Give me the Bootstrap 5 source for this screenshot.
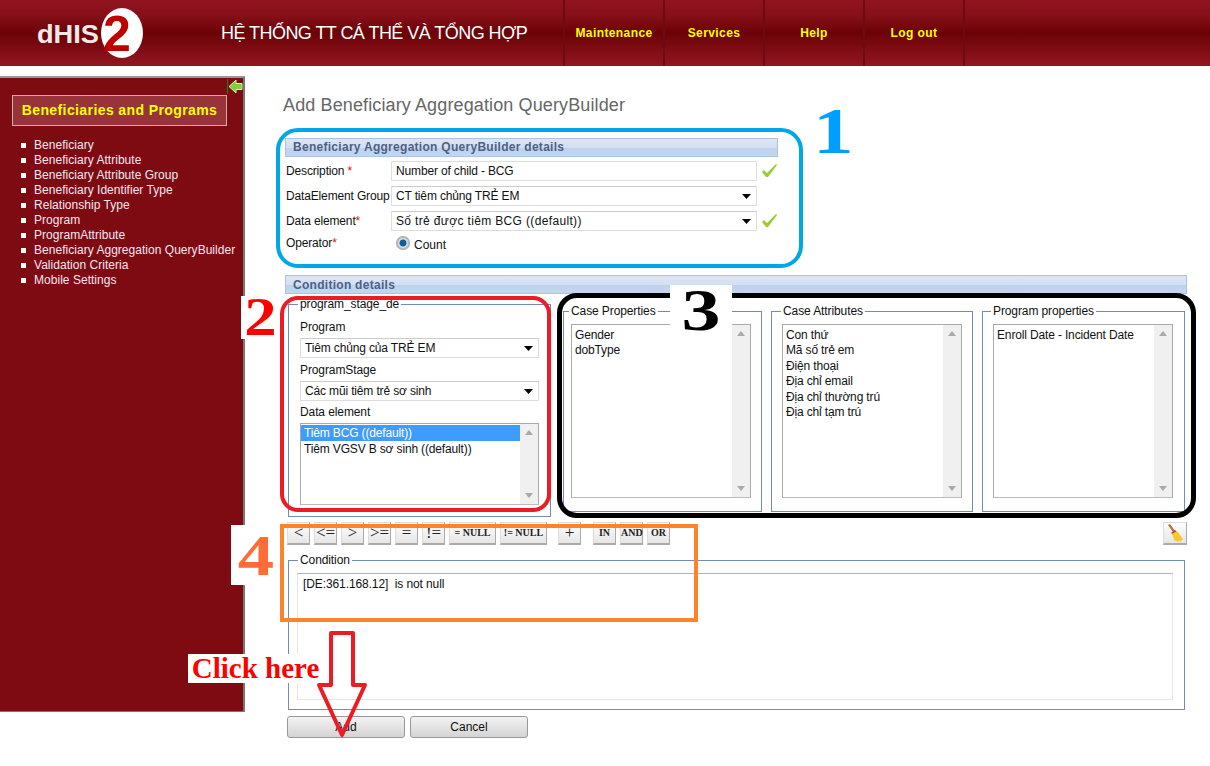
<!DOCTYPE html>
<html lang="vi">
<head>
  <meta charset="UTF-8">
  <title>Add Beneficiary Aggregation QueryBuilder</title>
  <link href="https://cdn.jsdelivr.net/npm/bootstrap@5.3.0/dist/css/bootstrap.min.css" rel="stylesheet">
  <script src="https://cdn.jsdelivr.net/npm/bootstrap@5.3.0/dist/js/bootstrap.bundle.min.js"></script>
  <style>
    html, body { height: 766px; overflow: hidden; }
    body { font-family: "Liberation Sans", Arial, sans-serif; font-size: 12px; color: #111; background: #fff; line-height: 15px; }
    .page-wrap { position: relative; width: 1210px; height: 766px; }

    /* header */
    .top-head { height: 66px; background: linear-gradient(#911420 0%, #850f18 25%, #6b0206 50%, #7f0c14 75%, #931722 100%); }
    .logo-box { width: 221px; padding-left: 35px; }
    .site-title { width: 342px; color: #fff; font-size: 18px; letter-spacing: -.55px; }
    .top-link { width: 100px; height: 66px; color: #ff0; font-weight: 700; letter-spacing: .4px; border-left: 2px solid #6d0a12; text-decoration: none; }
    .top-end { width: 2px; height: 66px; background: #6d0a12; }

    /* left menu */
    .side-menu { position: relative; flex: 0 0 245px; width: 245px; min-width: 0; height: 636px; margin-top: 10px; background: #7f0b12; border-top: 2px solid #999; border-right: 2px solid #777; border-bottom: 1px solid #777; padding: 17px 16px 0 12px; }
    .side-title { height: 31px; width: 215px; background: #983339; border: 1px solid #c4b0b0; color: #ff0; font-size: 14px; font-weight: 700; letter-spacing: .4px; }
    .side-list { margin: 12px 0 0 9px; }
    .side-list li { position: relative; padding-left: 13px; height: 15px; color: #f1e6f3; letter-spacing: .03px; white-space: nowrap; }
    .side-list li::before { content: ""; position: absolute; left: 0; top: 5px; width: 5px; height: 5px; background: #fff; }
    .side-toggle { position: absolute; right: 0; top: 1px; border-left: 1px solid #2f7a10; height: 15px; }

    /* content */
    .main-col { flex: 1; padding: 28px 23px 0 38px; min-width: 0; }
    .page-title { font-size: 18px; line-height: 22px; color: #666; margin: 0 0 22px; font-weight: 400; letter-spacing: .12px; }
    .sec-bar { height: 19px; margin-left: 2px; padding-left: 7px; background: linear-gradient(#dbe6f5 0%, #d2e0f2 50%, #bfd2ec 52%, #c5d6ee 100%); border: 1px solid #a9c3e6; color: #4d6185; font-weight: 700; letter-spacing: .28px; line-height: 17px; }
    .sec-bar-short { width: 493px; }
    .sec-bar-low { line-height: 19px; }
    .field-row { height: 20px; margin-bottom: 5px; padding-left: 3px; }
    .op-row { height: 14px; margin-bottom: 25px; }
    .field-label { width: 105px; flex: none; letter-spacing: -.15px; white-space: nowrap; }
    .req { color: #e01010; }
    .text-box, .pick-box { width: 366px; height: 20px; flex: none; border: 1px solid #ddd; border-radius: 1px; background-color: #fff; font-size: 12px; color: #111; padding: 0 4px; letter-spacing: -.15px; }
    .pick-box { padding: 0 24px 0 4px; box-shadow: none; line-height: 18px; border-top-color: #ccc; background-image: url("data:image/svg+xml,%3Csvg xmlns='http://www.w3.org/2000/svg' width='9' height='5'%3E%3Cpath d='M0 0h9L4.500 5z'/%3E%3C/svg%3E"); background-position: right 5px center; background-size: 9px 5px; }
    .pick-box-wide { width: 239px; display: block; }
    .pick-loose { letter-spacing: .35px; }
    .ok-mark { margin-left: 4px; }
    .radio-dot { appearance: none; width: 14px; height: 14px; margin: 0 4px 0 5px; border-radius: 50%; background: radial-gradient(circle, #0d5f96 0 3px, #dfe6ea 4px, #9a9a9a 7px); }

    /* condition area */
    .cond-row { margin: 3px 0 0 5px; gap: 9px; }
    .group-box { border: 1px solid #6f8db8; min-width: 0; margin: 0; }
    .group-box legend { float: none; width: auto; font-size: 12px; line-height: 14px; padding: 0 2px; margin: 0 0 0 -2px; color: #111; letter-spacing: -.1px; }
    .stage-box { width: 263px; height: 220px; padding: 0 11px 0 11px; margin-right: 3px; }
    .stage-label { margin: 9px 0 3px; height: 15px; letter-spacing: -.1px; }
    .stage-label-next { margin: 4px 0 3px; }
    .stage-label-mid { margin-top: 5px; }
    .stage-list { height: 82px; margin-top: 3px; }
    .stage-list .list-items { padding-top: 1px; }
    .stage-list .list-items div { height: 16px; line-height: 16px; }
    .prop-box { height: 208px; padding: 6px 10px 0 10px; margin-top: 7px; }
    .prop-first { width: 199px; padding-left: 7px; }
    .prop-next { width: 202px; }
    .prop-next legend { margin-left: -1px; }
    .prop-last { width: 203px; padding-right: 11px; }
    .prop-list { height: 174px; }
    .prop-list .list-items { padding-top: 3px; }
    .list-frame { border: 1px solid #aaa; border-bottom-color: #bbb; background: #fff; display: flex; }
    .list-items { flex: 1; min-width: 0; padding: 1px 0 0 3px; line-height: 15.4px; white-space: nowrap; overflow: hidden; }
    .list-items div { height: 15.4px; letter-spacing: -.15px; }
    .list-items .is-picked { background: #3f9cff; color: #fff; margin-left: -3px; padding-left: 3px; }
    .fake-scroll { width: 18px; flex: none; background: #f0f0f0; display: flex; flex-direction: column; justify-content: space-between; align-items: center; padding: 6px 0; }
    .arr-up { border: 4px solid transparent; border-top: 0; border-bottom: 5px solid #aaa; }
    .arr-down { border: 4px solid transparent; border-bottom: 0; border-top: 5px solid #aaa; }

    .tool-row { margin-top: 5px; padding-left: 4px; height: 23px; }
    .tool-btn { height: 23px; width: 23px; padding: 0; margin-right: 4px; background: linear-gradient(#fdfdfd, #e6e6e6); border: 1px solid #ddd; border-right-color: #aaa; border-bottom: 2px solid #aaa; font-family: "Liberation Serif", serif; font-size: 17px; line-height: 18px; color: #222; }
    .tool-txt { font-size: 10px; font-weight: 700; }
    .tool-w { width: 47px; }
    .gap-l { margin-left: 7px; }
    .gap-m { margin-left: 8px; }
    .broom-btn { width: 24px; margin-right: 0; margin-left: auto; }
    .cond-box { margin: 8px 2px 0 5px; height: 157px; padding: 6px 11px 9px 8px; }
    .cond-box legend { margin-left: 1px; }
    .cond-text { height: 127px; border: 1px solid #e6e6e6; border-top-color: #a9b4c4; padding: 3px 5px; letter-spacing: -.1px; }
    .act-row { margin: 6px 0 0 4px; gap: 5px; }
    .act-btn { width: 118px; height: 22px; padding: 0; font-size: 12px; line-height: 18px; color: #111; border: 1px solid #999; border-radius: 3px; background: linear-gradient(#f3f3f3, #d4d4d4); }

    /* annotations drawn over the page */
    .note-frame { position: absolute; border-style: solid; border-width: 4px; }
    .note-blue { left: 276px; top: 128px; width: 527px; height: 140px; border-color: #00a7e6; border-radius: 22px; }
    .note-red { left: 280px; top: 296px; width: 271px; height: 216px; border-color: #ed1c24; border-radius: 18px; }
    .note-black { left: 557px; top: 293px; width: 639px; height: 225px; border-color: #000; border-width: 5px; border-radius: 20px; }
    .note-orange { left: 280px; top: 524px; width: 418px; height: 98px; border-color: #ff832b; }
    .note-num { position: absolute; background: #fff; font-family: "Liberation Serif", serif; font-weight: 700; text-align: center; }
    .note-num span { display: inline-block; }
    .num-one { left: 812px; top: 97px; width: 42px; height: 68px; font-size: 65px; line-height: 68px; color: #009fff; background: none; }
    .num-one span { transform: scaleX(1.25); }
    .num-two { left: 241px; top: 296px; width: 39px; height: 43px; font-size: 54px; line-height: 43px; color: #f00; }
    .num-two span { transform: scaleX(1.2); }
    .num-three { left: 670px; top: 285px; width: 62px; height: 47px; font-size: 60px; line-height: 50px; color: #000; }
    .num-three span { transform: scaleX(1.3); }
    .num-four { left: 231px; top: 525px; width: 49px; height: 60px; font-size: 56px; line-height: 62px; color: #ff6c37; }
    .num-four span { transform: scaleX(1.3); }
    .click-note { position: absolute; left: 188px; top: 654px; width: 135px; height: 29px; background: #fff; color: #f00; font-family: "Liberation Serif", serif; font-size: 29px; font-weight: 700; line-height: 29px; text-align: center; white-space: nowrap; }
    .note-arrow { position: absolute; left: 314px; top: 628px; }
  </style>
</head>
<body>
<div class="page-wrap">
  <!-- header -->
  <div class="top-head d-flex align-items-center">
    <div class="logo-box">
      <svg width="112" height="58" viewBox="0 -2 112 58">
        <text x="2" y="37" font-family="Liberation Sans" font-size="25" font-weight="700" fill="#f4e9e9" textLength="62" lengthAdjust="spacingAndGlyphs">dHIS</text>
        <ellipse cx="87" cy="27" rx="21" ry="25" fill="#fff"/>
        <text x="68" y="45" font-family="Liberation Sans" font-size="50" font-weight="700" fill="#c00000">2</text>
      </svg>
    </div>
    <div class="site-title">HỆ THỐNG TT CÁ THỂ VÀ TỔNG HỢP</div>
    <a class="top-link d-flex align-items-center justify-content-center" href="#">Maintenance</a>
    <a class="top-link d-flex align-items-center justify-content-center" href="#">Services</a>
    <a class="top-link d-flex align-items-center justify-content-center" href="#">Help</a>
    <a class="top-link d-flex align-items-center justify-content-center" href="#">Log out</a>
    <div class="top-end"></div>
  </div>

  <div class="d-flex">
    <!-- left menu -->
    <div class="side-menu">
      <div class="side-toggle">
        <svg width="15" height="15" viewBox="0 0 15 15"><path d="M1 7.500 8 1v3.500h6v6H8V14z" fill="#7fd03a" stroke="#d6f5b0"/></svg>
      </div>
      <div class="side-title d-flex align-items-center justify-content-center">Beneficiaries and Programs</div>
      <ul class="side-list list-unstyled">
        <li>Beneficiary</li>
        <li>Beneficiary Attribute</li>
        <li>Beneficiary Attribute Group</li>
        <li>Beneficiary Identifier Type</li>
        <li>Relationship Type</li>
        <li>Program</li>
        <li>ProgramAttribute</li>
        <li>Beneficiary Aggregation QueryBuilder</li>
        <li>Validation Criteria</li>
        <li>Mobile Settings</li>
      </ul>
    </div>

    <!-- content -->
    <div class="main-col">
      <h1 class="page-title">Add Beneficiary Aggregation QueryBuilder</h1>

      <div class="sec-bar sec-bar-short mb-1">Beneficiary Aggregation QueryBuilder details</div>
      <div class="field-row d-flex align-items-center">
        <div class="field-label">Description <span class="req">*</span></div>
        <input class="text-box" type="text" value="Number of child - BCG">
        <svg class="ok-mark" width="17" height="16" viewBox="0 0 17 16"><path d="M1 9l2-2 3 3 9-9 1 1-9 12h-2z" fill="#9ccb2e"/></svg>
      </div>
      <div class="field-row d-flex align-items-center">
        <div class="field-label">DataElement Group</div>
        <select class="form-select pick-box"><option>CT tiêm chủng TRẺ EM</option></select>
      </div>
      <div class="field-row d-flex align-items-center">
        <div class="field-label">Data element<span class="req">*</span></div>
        <select class="form-select pick-box pick-loose"><option>Số trẻ được tiêm BCG ((default))</option></select>
        <svg class="ok-mark" width="17" height="16" viewBox="0 0 17 16"><path d="M1 9l2-2 3 3 9-9 1 1-9 12h-2z" fill="#9ccb2e"/></svg>
      </div>
      <div class="field-row op-row d-flex align-items-center">
        <div class="field-label">Operator<span class="req">*</span></div>
        <input class="radio-dot" type="radio" checked>
        <span class="mt-1">Count</span>
      </div>

      <div class="sec-bar sec-bar-low">Condition details</div>

      <div class="cond-row d-flex">
        <fieldset class="group-box stage-box">
          <legend>program_stage_de</legend>
          <div class="stage-label">Program</div>
          <select class="form-select pick-box pick-box-wide"><option>Tiêm chủng của TRẺ EM</option></select>
          <div class="stage-label stage-label-next stage-label-mid">ProgramStage</div>
          <select class="form-select pick-box pick-box-wide"><option>Các mũi tiêm trẻ sơ sinh</option></select>
          <div class="stage-label stage-label-next">Data element</div>
          <div class="list-frame stage-list">
            <div class="list-items">
              <div class="is-picked">Tiêm BCG ((default))</div>
              <div>Tiêm VGSV B sơ sinh ((default))</div>
            </div>
            <div class="fake-scroll"><span class="arr-up"></span><span class="arr-down"></span></div>
          </div>
        </fieldset>

        <fieldset class="group-box prop-box prop-first">
          <legend>Case Properties</legend>
          <div class="list-frame prop-list">
            <div class="list-items">
              <div>Gender</div>
              <div>dobType</div>
            </div>
            <div class="fake-scroll"><span class="arr-up"></span><span class="arr-down"></span></div>
          </div>
        </fieldset>
        <fieldset class="group-box prop-box prop-next">
          <legend>Case Attributes</legend>
          <div class="list-frame prop-list">
            <div class="list-items">
              <div>Con thứ</div>
              <div>Mã số trẻ em</div>
              <div>Điện thoại</div>
              <div>Địa chỉ email</div>
              <div>Địa chỉ thường trú</div>
              <div>Địa chỉ tạm trú</div>
            </div>
            <div class="fake-scroll"><span class="arr-up"></span><span class="arr-down"></span></div>
          </div>
        </fieldset>
        <fieldset class="group-box prop-box prop-last">
          <legend>Program properties</legend>
          <div class="list-frame prop-list">
            <div class="list-items">
              <div>Enroll Date - Incident Date</div>
            </div>
            <div class="fake-scroll"><span class="arr-up"></span><span class="arr-down"></span></div>
          </div>
        </fieldset>
      </div>

      <div class="tool-row d-flex">
        <button class="tool-btn">&lt;</button>
        <button class="tool-btn">&lt;=</button>
        <button class="tool-btn">&gt;</button>
        <button class="tool-btn">&gt;=</button>
        <button class="tool-btn">=</button>
        <button class="tool-btn">!=</button>
        <button class="tool-btn tool-txt tool-w">= NULL</button>
        <button class="tool-btn tool-txt tool-w">!= NULL</button>
        <button class="tool-btn gap-l">+</button>
        <button class="tool-btn tool-txt gap-m">IN</button>
        <button class="tool-btn tool-txt">AND</button>
        <button class="tool-btn tool-txt">OR</button>
        <button class="tool-btn broom-btn">
          <svg width="18" height="19" viewBox="0 0 18 19">
            <path d="M2 1l2-1 5 7-2 1z" fill="#a8743a"/>
            <path d="M5 9l4-3 1.500 1.500-4 2.500z" fill="#c8322a"/>
            <path d="M6 10l5-3 6 8-3 3-1-2-1 2.500-2-2-1 1z" fill="#f5c927"/>
          </svg>
        </button>
      </div>

      <fieldset class="group-box cond-box">
        <legend>Condition</legend>
        <div class="cond-text">[DE:361.168.12]&nbsp; is not null</div>
      </fieldset>

      <div class="act-row d-flex">
        <button class="act-btn">Add</button>
        <button class="act-btn">Cancel</button>
      </div>
    </div>
  </div>

  <!-- annotations over the screenshot -->
  <div class="note-frame note-blue"></div>
  <div class="note-frame note-red"></div>
  <div class="note-frame note-black"></div>
  <div class="note-frame note-orange"></div>
  <div class="note-num num-one"><span>1</span></div>
  <div class="note-num num-two"><span>2</span></div>
  <div class="note-num num-three"><span>3</span></div>
  <div class="note-num num-four"><span>4</span></div>
  <div class="click-note">Click here</div>
  <svg class="note-arrow" width="58" height="112" viewBox="0 0 58 112">
    <path d="M17 5H39V57H51L28 107 5 57H17z" fill="none" stroke="#ed1c24" stroke-width="4" stroke-linejoin="round"/>
  </svg>
</div>
</body>
</html>
